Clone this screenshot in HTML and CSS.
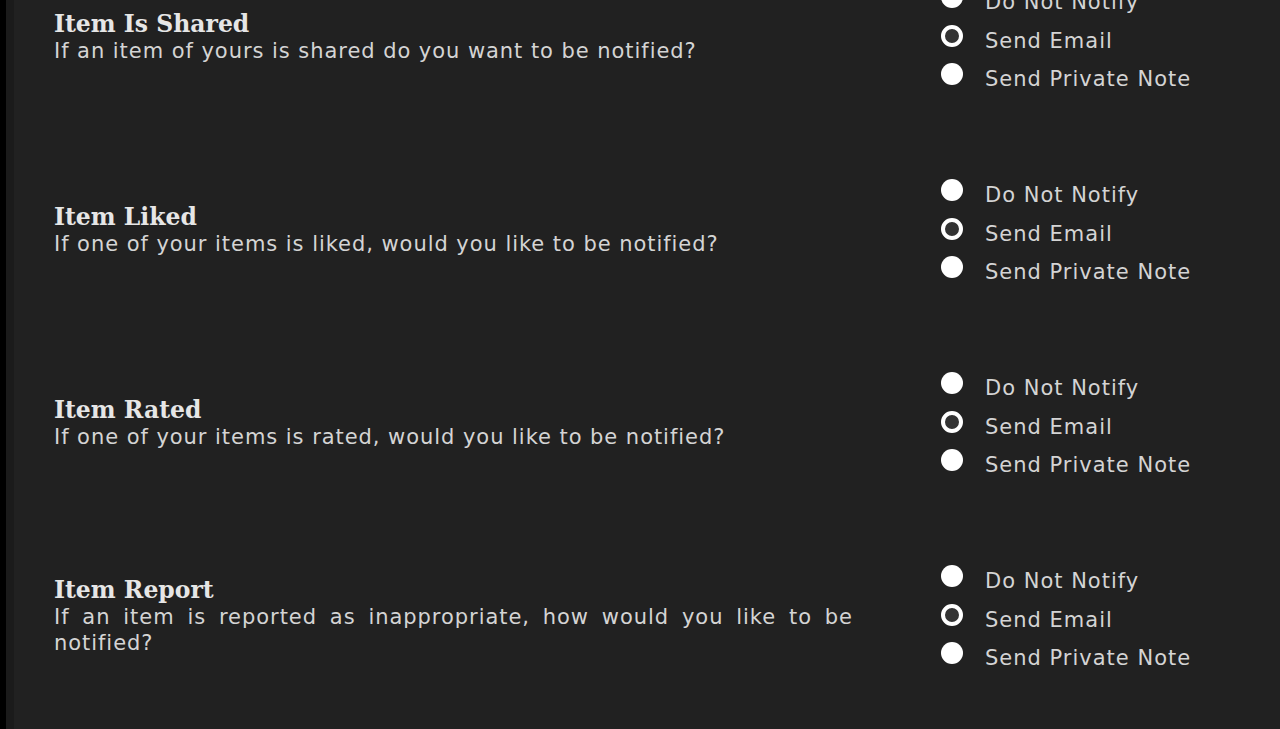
FILE: index.html
```html
<!DOCTYPE html>
<html>
<head>
<meta charset="utf-8">
<link rel="stylesheet" href="styles.css">
</head>
<body>
<div class="frame">
  <div class="panel">
    <div class="list">
      <div class="row">
        <div class="info">
          <h3 class="title">Item Is Shared</h3>
          <p class="desc">If an item of yours is shared do you want to be notified?</p>
        </div>
        <div class="options">
          <label class="opt"><input type="radio" name="r1"> <span>Do Not Notify</span></label>
          <label class="opt"><input type="radio" name="r1" checked> <span>Send Email</span></label>
          <label class="opt"><input type="radio" name="r1"> <span>Send Private Note</span></label>
        </div>
      </div>
      <div class="row">
        <div class="info">
          <h3 class="title">Item Liked</h3>
          <p class="desc">If one of your items is liked, would you like to be notified?</p>
        </div>
        <div class="options">
          <label class="opt"><input type="radio" name="r2"> <span>Do Not Notify</span></label>
          <label class="opt"><input type="radio" name="r2" checked> <span>Send Email</span></label>
          <label class="opt"><input type="radio" name="r2"> <span>Send Private Note</span></label>
        </div>
      </div>
      <div class="row">
        <div class="info">
          <h3 class="title">Item Rated</h3>
          <p class="desc">If one of your items is rated, would you like to be notified?</p>
        </div>
        <div class="options">
          <label class="opt"><input type="radio" name="r3"> <span>Do Not Notify</span></label>
          <label class="opt"><input type="radio" name="r3" checked> <span>Send Email</span></label>
          <label class="opt"><input type="radio" name="r3"> <span>Send Private Note</span></label>
        </div>
      </div>
      <div class="row">
        <div class="info">
          <h3 class="title">Item Report</h3>
          <p class="desc">If an item is reported as inappropriate, how would you like to be notified?</p>
        </div>
        <div class="options">
          <label class="opt"><input type="radio" name="r4"> <span>Do Not Notify</span></label>
          <label class="opt"><input type="radio" name="r4" checked> <span>Send Email</span></label>
          <label class="opt"><input type="radio" name="r4"> <span>Send Private Note</span></label>
        </div>
      </div>
    </div>
  </div>
</div>
</body>
</html>
```
FILE: styles.css
```css
html, body {
  margin: 0;
  padding: 0;
  height: 100%;
  background: #212121;
  overflow: hidden;
}
.frame {
  height: 100%;
  border-left: 6px solid #000;
}
.panel {
  display: flow-root;
  height: 100%;
  border-left: 8px solid #1b1b1b;
  background: #212121;
  padding-left: 40px;
}
.list {
  margin-top: -59px;
}
.row {
  height: 193px;
  display: flex;
  align-items: center;
}
.info {
  width: 799px;
}
.title {
  margin: 0;
  font-family: "DejaVu Serif", serif;
  font-weight: bold;
  font-size: 23.5px;
  line-height: 27px;
  color: #e6e6e6;
}
.desc {
  margin: 0;
  font-family: "DejaVu Sans", sans-serif;
  font-size: 21px;
  letter-spacing: 0.95px;
  line-height: 26px;
  color: #d4d4d4;
  text-align: justify;
}
.options {
  margin-left: 88px;
  display: flex;
  flex-direction: column;
}
.opt {
  display: flex;
  align-items: center;
  height: 38.5px;
  font-family: "DejaVu Sans", sans-serif;
  font-size: 21px;
  letter-spacing: 1px;
  color: #d4d4d4;
}
.opt span {
  padding-top: 6px;
}
.opt input {
  appearance: none;
  -webkit-appearance: none;
  margin: 0 22px 4px 0;
  width: 22px;
  height: 22px;
  border-radius: 50%;
  background: #fff;
  box-sizing: border-box;
}
.opt input:checked {
  background: #333;
  border: 4px solid #fff;
}
```
